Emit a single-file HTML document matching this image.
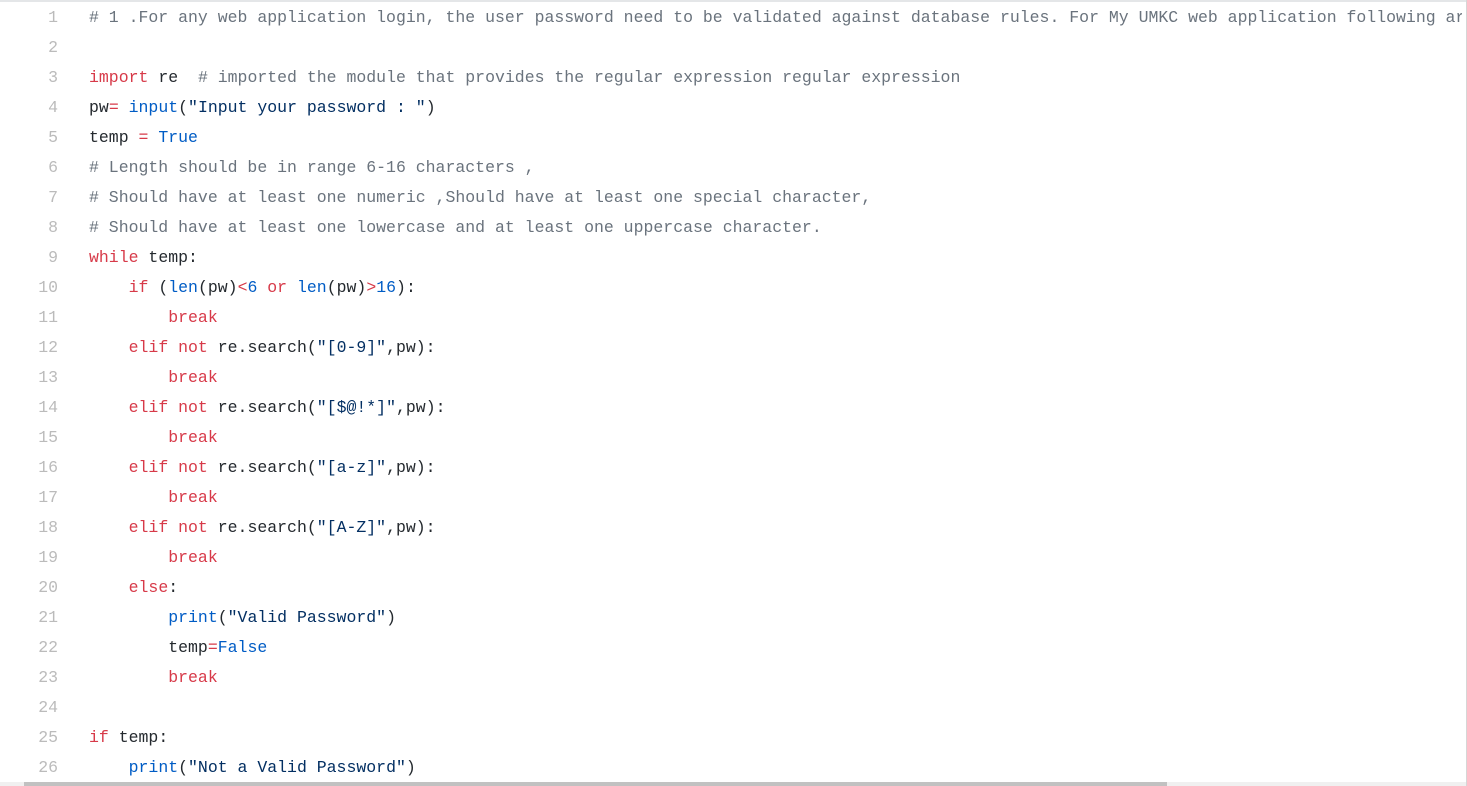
<!DOCTYPE html>
<html><head><meta charset="utf-8"><style>
html,body{margin:0;padding:0;background:#fff;width:1467px;height:786px;overflow:hidden;}
.wrap{position:absolute;left:0;top:0;width:1466px;height:786px;border-right:1px solid #d6d6d6;overflow:hidden;}
.topb{position:absolute;left:0;top:0;width:1467px;height:2px;background:#e4e6e8;}
.code{position:absolute;left:0;top:3px;width:1462px;overflow:hidden;font-family:"Liberation Mono",monospace;font-size:16.5px;}
.l{height:30px;line-height:30px;position:relative;}
.n{position:absolute;left:0;width:58px;text-align:right;color:#bbbbbb;}
.t{position:absolute;left:89px;color:#24292e;white-space:pre;}
.k{color:#d73a49}.b{color:#005cc5}.s{color:#032f62}.c{color:#6a737d}
.track{position:absolute;left:0;top:782px;width:1466px;height:4px;background:#f0f0f0;}
.thumb{position:absolute;left:24px;top:782px;width:1143px;height:4px;background:#c1c1c1;}
</style></head><body><div class="wrap"><div class="topb"></div>
<div class="code">
<div class="l"><span class="n">1</span><span class="t c"># 1 .For any web application login, the user password need to be validated against database rules. For My UMKC web application following are the rules</span></div>
<div class="l"><span class="n">2</span></div>
<div class="l"><span class="n">3</span><span class="t"><span class="k">import</span> re  <span class="c"># imported the module that provides the regular expression regular expression</span></span></div>
<div class="l"><span class="n">4</span><span class="t">pw<span class="k">=</span> <span class="b">input</span>(<span class="s">"Input your password : "</span>)</span></div>
<div class="l"><span class="n">5</span><span class="t">temp <span class="k">=</span> <span class="b">True</span></span></div>
<div class="l"><span class="n">6</span><span class="t c"># Length should be in range 6-16 characters ,</span></div>
<div class="l"><span class="n">7</span><span class="t c"># Should have at least one numeric ,Should have at least one special character,</span></div>
<div class="l"><span class="n">8</span><span class="t c"># Should have at least one lowercase and at least one uppercase character.</span></div>
<div class="l"><span class="n">9</span><span class="t"><span class="k">while</span> temp:</span></div>
<div class="l"><span class="n">10</span><span class="t">    <span class="k">if</span> (<span class="b">len</span>(pw)<span class="k">&lt;</span><span class="b">6</span> <span class="k">or</span> <span class="b">len</span>(pw)<span class="k">&gt;</span><span class="b">16</span>):</span></div>
<div class="l"><span class="n">11</span><span class="t">        <span class="k">break</span></span></div>
<div class="l"><span class="n">12</span><span class="t">    <span class="k">elif</span> <span class="k">not</span> re.search(<span class="s">"[0-9]"</span>,pw):</span></div>
<div class="l"><span class="n">13</span><span class="t">        <span class="k">break</span></span></div>
<div class="l"><span class="n">14</span><span class="t">    <span class="k">elif</span> <span class="k">not</span> re.search(<span class="s">"[$@!*]"</span>,pw):</span></div>
<div class="l"><span class="n">15</span><span class="t">        <span class="k">break</span></span></div>
<div class="l"><span class="n">16</span><span class="t">    <span class="k">elif</span> <span class="k">not</span> re.search(<span class="s">"[a-z]"</span>,pw):</span></div>
<div class="l"><span class="n">17</span><span class="t">        <span class="k">break</span></span></div>
<div class="l"><span class="n">18</span><span class="t">    <span class="k">elif</span> <span class="k">not</span> re.search(<span class="s">"[A-Z]"</span>,pw):</span></div>
<div class="l"><span class="n">19</span><span class="t">        <span class="k">break</span></span></div>
<div class="l"><span class="n">20</span><span class="t">    <span class="k">else</span>:</span></div>
<div class="l"><span class="n">21</span><span class="t">        <span class="b">print</span>(<span class="s">"Valid Password"</span>)</span></div>
<div class="l"><span class="n">22</span><span class="t">        temp<span class="k">=</span><span class="b">False</span></span></div>
<div class="l"><span class="n">23</span><span class="t">        <span class="k">break</span></span></div>
<div class="l"><span class="n">24</span></div>
<div class="l"><span class="n">25</span><span class="t"><span class="k">if</span> temp:</span></div>
<div class="l"><span class="n">26</span><span class="t">    <span class="b">print</span>(<span class="s">"Not a Valid Password"</span>)</span></div>
</div>
<div class="track"></div><div class="thumb"></div>
</div></body></html>
